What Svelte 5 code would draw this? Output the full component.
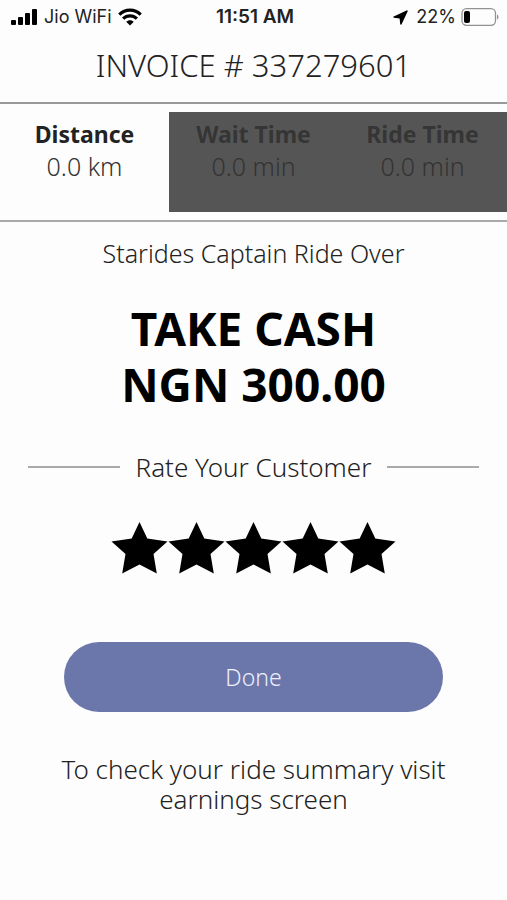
<script>
  const stats = [
    { label: 'Distance', value: '0.0 km' },
    { label: 'Wait Time', value: '0.0 min', dimmed: true },
    { label: 'Ride Time', value: '0.0 min', dimmed: true }
  ];
  const stars = [1, 2, 3, 4, 5];
  let rating = $state(5);
</script>

<div class="screen">
  <div class="status">
    <div class="carrier">
      <svg width="27" height="18" viewBox="0 0 27 18" aria-hidden="true">
        <rect x="0" y="12" width="5" height="5" rx="1" />
        <rect x="7" y="9" width="5" height="8" rx="1" />
        <rect x="14" y="5" width="5" height="12" rx="1" />
        <rect x="21" y="1" width="5" height="16" rx="1" />
      </svg>
      <span>Jio WiFi</span>
      <svg width="24" height="18" viewBox="0 0 24 18" aria-hidden="true">
        <g fill="none" stroke="#000" stroke-width="3.2">
          <path d="M1.3 6.7C7.3 .6 16.7 .6 22.7 6.7" />
          <path d="M5.1 10.7c4-3.9 9.8-3.9 13.8 0" />
        </g>
        <path d="M8.2 13.7c2.2-2.1 5.4-2.1 7.6 0L12 17.5z" />
      </svg>
    </div>
    <span class="clock">11:51 AM</span>
    <div class="power">
      <svg width="15" height="15" viewBox="0 0 15 15" aria-hidden="true">
        <path d="M13.6 .4 .7 6.4c-.8.4-.6 1.3.3 1.4l5.6.6.6 5.6c.1.9 1 1.1 1.4.3L14.6 1.4c.3-.7-.3-1.3-1-1z" />
      </svg>
      <span>22%</span>
      <svg width="38" height="18" viewBox="0 0 38 18" aria-hidden="true">
        <rect x="1" y=".7" width="33.5" height="16.6" rx="4.5" fill="none" stroke="#929292" stroke-width="1.3" />
        <rect x="3" y="3" width="6" height="12" rx="2" />
        <path d="M36 6.5c2 .8 2 4.2 0 5z" fill="#929292" />
      </svg>
    </div>
  </div>

  <h1>INVOICE # 337279601</h1>

  <dl class="stats">
    {#each stats as stat}
      <div class="stat" class:dimmed={stat.dimmed}>
        <dt>{stat.label}</dt>
        <dd>{stat.value}</dd>
      </div>
    {/each}
  </dl>

  <p class="message">Starides Captain Ride Over</p>

  <h2>TAKE CASH<br />NGN 300.00</h2>

  <fieldset>
    <legend>
      <span class="rule"></span>
      <span>Rate Your Customer</span>
      <span class="rule"></span>
    </legend>
    <div class="stars">
      {#each stars as n}
        <label class:off={n > rating}>
          <input type="radio" name="rating" value={n} bind:group={rating} aria-label={`${n} stars`} />
          <svg width="57" height="52" viewBox="0 0 57 52" aria-hidden="true">
            <path d="M28.5 0 36.3 16.5 56.5 19.5 42.5 32 45.8 51.5 28.5 42.5 11.2 51.5 14.5 32 .5 19.5 20.7 16.5z" />
          </svg>
        </label>
      {/each}
    </div>
  </fieldset>

  <button type="button">Done</button>

  <p class="hint">To check your ride summary visit earnings screen</p>
</div>

<style>
  :global(body) {
    margin: 0;
    background: #fdfdfd;
  }
  .screen {
    display: flex;
    flex-direction: column;
    min-height: 100vh;
    background: #fdfdfd;
    color: #222;
    font-family: 'Noto Sans', 'Open Sans', sans-serif;
    font-size: 25px;
    font-weight: 300;
    line-height: 30px;
    text-align: center;
  }
  .status {
    display: grid;
    grid-template-columns: 1fr auto 1fr;
    align-items: center;
    height: 34px;
    padding: 0 8px 0 11px;
    font-family: Inter, sans-serif;
    font-size: 18px;
    font-weight: 400;
    line-height: 24px;
  }
  .carrier,
  .power {
    display: flex;
    align-items: center;
  }
  .carrier {
    gap: 6px;
  }
  .power {
    justify-content: flex-end;
    gap: 5px;
  }
  .power span {
    margin-left: 3px;
  }
  .clock {
    font-size: 19px;
    font-weight: 600;
  }
  h1 {
    margin: 11px 0 17px;
    font-size: 31px;
    font-weight: 300;
    line-height: 40px;
  }
  .stats {
    display: grid;
    grid-template-columns: repeat(3, 1fr);
    margin: 0;
    padding: 8px 0;
    border-top: 2px solid #999;
    border-bottom: 2px solid #aaa;
  }
  .stat {
    box-sizing: border-box;
    min-height: 100px;
    padding-top: 6px;
    line-height: 32px;
  }
  .stat dt {
    font-size: 23px;
    font-weight: 700;
  }
  .stat dd {
    margin: 0;
    color: #333;
  }
  .dimmed {
    background: #555;
    color: #353535;
  }
  .message {
    margin: 16px 0 32px;
  }
  h2 {
    margin: 0;
    color: #000;
    font-size: 46px;
    font-weight: 700;
    line-height: 56px;
  }
  fieldset {
    margin: 40px 28px 0;
    padding: 0;
    border: 0;
    min-width: 0;
  }
  legend {
    display: flex;
    align-items: center;
    gap: 16px;
    box-sizing: border-box;
    width: 100%;
    padding: 0;
    font-size: 26px;
  }
  .rule {
    flex: 1;
    height: 2px;
    background: #aaa;
  }
  .stars {
    display: flex;
    justify-content: center;
    margin-top: 40px;
  }
  .stars label {
    position: relative;
    display: flex;
    cursor: pointer;
  }
  .stars input {
    position: absolute;
    inset: 0;
    margin: 0;
    opacity: 0;
  }
  .off svg {
    fill: #ccc;
  }
  button {
    margin: 68px 64px 0;
    height: 70px;
    border: 0;
    border-radius: 35px;
    background: #6b76aa;
    color: #edf0ff;
    font: inherit;
    font-size: 23px;
    cursor: pointer;
  }
  .hint {
    margin: 42px 56px 0;
    font-size: 26px;
  }
</style>
